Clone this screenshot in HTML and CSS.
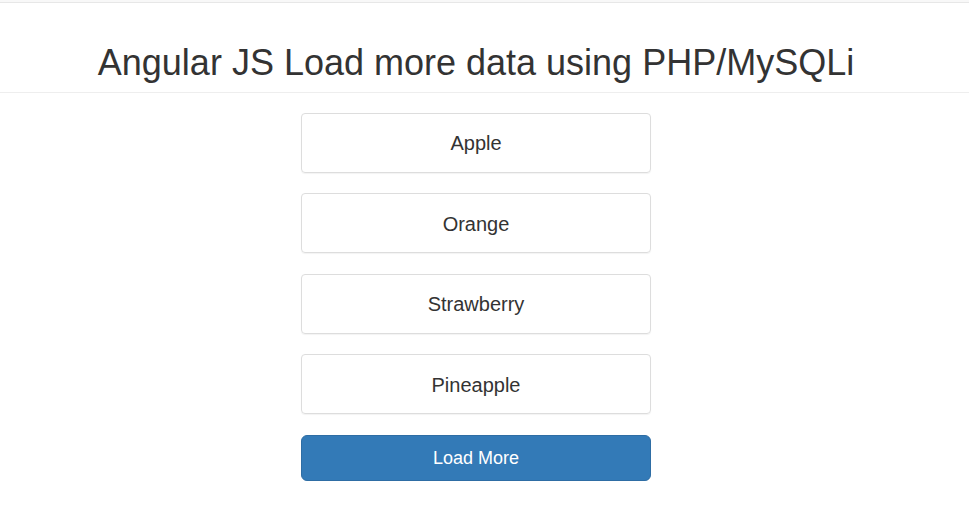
FILE: index.html
```html
<!DOCTYPE html>
<html lang="en">
<head>
<meta charset="utf-8">
<title>Angular JS Load more data using PHP/MySQLi</title>
<link rel="stylesheet" href="styles.css">
</head>
<body>
<div class="topbar"></div>
<header class="page-header">
  <div class="wrap">
    <h1 class="title">Angular JS Load more data using PHP/MySQLi</h1>
  </div>
</header>
<main class="wrap">
  <div class="list">
    <div class="item">Apple</div>
    <div class="item">Orange</div>
    <div class="item">Strawberry</div>
    <div class="item">Pineapple</div>
    <button class="btn-load" type="button">Load More</button>
  </div>
</main>
</body>
</html>
```
FILE: styles.css
```css
html, body {
  margin: 0;
  padding: 0;
  background: #fff;
  font-family: "Liberation Sans", Arial, Helvetica, sans-serif;
  color: #333;
}
.topbar {
  height: 2px;
  background: #f8f8f8;
  border-bottom: 1px solid #e7e7e7;
}
.wrap {
  width: 952px;
}
.page-header {
  margin-top: 40px;
  padding-bottom: 9px;
  border-bottom: 1px solid #eee;
}
.title {
  margin: 0;
  font-size: 36px;
  font-weight: 400;
  line-height: 1.1;
  text-align: center;
  color: #333;
}
.list {
  width: 350px;
  margin: 20px auto 0;
  display: flex;
  flex-direction: column;
}
.item {
  box-sizing: border-box;
  height: 60px;
  margin-bottom: 20.5px;
  padding-top: 2px;
  border: 1px solid #ddd;
  border-radius: 4px;
  box-shadow: 0 1px 1px rgba(0,0,0,0.05);
  display: flex;
  align-items: center;
  justify-content: center;
  font-size: 20px;
  color: #333;
}
.btn-load {
  box-sizing: border-box;
  height: 46px;
  width: 100%;
  padding: 11px 16px 9px;
  font-family: "Liberation Sans", Arial, Helvetica, sans-serif;
  font-size: 18px;
  line-height: 1.3333;
  color: #fff;
  background: #337ab7;
  border: 1px solid #2e6da4;
  border-radius: 6px;
  cursor: pointer;
}
```
